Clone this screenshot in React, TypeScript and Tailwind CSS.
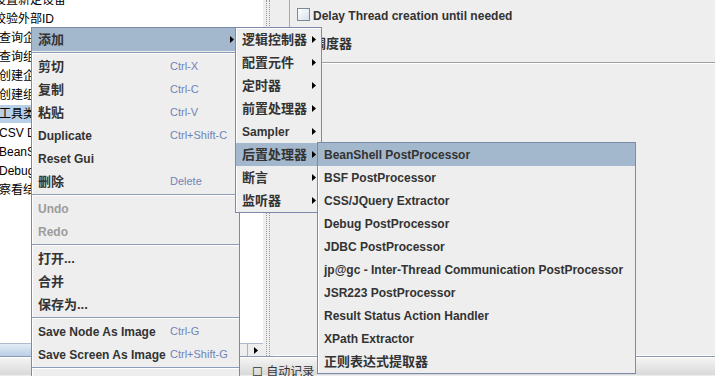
import React from "react";

type Item =
  | "sep"
  | { label: string; keys?: string; arrow?: boolean; active?: boolean; disabled?: boolean };

const isCjk = (s: string) => /[\u4e00-\u9fff]/.test(s);

const mainMenu: Item[] = [
  { label: "添加", arrow: true, active: true },
  "sep",
  { label: "剪切", keys: "Ctrl-X" },
  { label: "复制", keys: "Ctrl-C" },
  { label: "粘贴", keys: "Ctrl-V" },
  { label: "Duplicate", keys: "Ctrl+Shift-C" },
  { label: "Reset Gui" },
  { label: "删除", keys: "Delete" },
  "sep",
  { label: "Undo", disabled: true },
  { label: "Redo", disabled: true },
  "sep",
  { label: "打开..." },
  { label: "合并" },
  { label: "保存为..." },
  "sep",
  { label: "Save Node As Image", keys: "Ctrl-G" },
  { label: "Save Screen As Image", keys: "Ctrl+Shift-G" },
  "sep",
  { label: "Save Selection As..." },
];

const addMenu: Item[] = [
  { label: "逻辑控制器", arrow: true },
  { label: "配置元件", arrow: true },
  { label: "定时器", arrow: true },
  { label: "前置处理器", arrow: true },
  { label: "Sampler", arrow: true },
  { label: "后置处理器", arrow: true, active: true },
  { label: "断言", arrow: true },
  { label: "监听器", arrow: true },
];

const postMenu: Item[] = [
  { label: "BeanShell PostProcessor", active: true },
  { label: "BSF PostProcessor" },
  { label: "CSS/JQuery Extractor" },
  { label: "Debug PostProcessor" },
  { label: "JDBC PostProcessor" },
  { label: "jp@gc - Inter-Thread Communication PostProcessor" },
  { label: "JSR223 PostProcessor" },
  { label: "Result Status Action Handler" },
  { label: "XPath Extractor" },
  { label: "正则表达式提取器" },
];

const treeRows = [
  { text: "设置新定设备", shift: true },
  { text: "校验外部ID", shift: true },
  { text: "查询企业信息" },
  { text: "查询组织信息" },
  { text: "创建企业" },
  { text: "创建组织" },
  { text: "工具类", selected: true },
  { text: "CSV Data Set Config" },
  { text: "BeanShell Sampler" },
  { text: "Debug Sampler" },
  { text: "察看结果树" },
];

const Arrow = () => (
  <svg width="4" height="7" viewBox="0 0 4 7" className="shrink-0">
    <path d="M0 0L4 3.5L0 7Z" fill="#000" />
  </svg>
);

const CheckBox = () => (
  <div className="w-[13px] h-[13px] border border-[#7a8a99] bg-gradient-to-br from-white to-[#d4e0ec] shrink-0" />
);

const Menu = ({ items, labelWidth }: { items: Item[]; labelWidth?: number }) => (
  <div className="border border-[#7b8aa9] bg-[#eeeeee] shadow-[inset_1px_1px_0_#fff] py-0">
    {items.map((it, i) => {
      if (it === "sep")
        return (
          <div key={i} className="h-[4px] flex flex-col justify-center">
            <div className="border-t border-[#8c9bb8] border-b border-b-white" />
          </div>
        );
      const size = isCjk(it.label) ? "text-[13px]" : "text-[12px]";
      const color = it.disabled ? "text-[#9c9c9c]" : "text-[#333333]";
      return (
        <div
          key={i}
          className={`h-[23px] flex items-center pl-[6px] pr-[5px] ${it.active ? "bg-[#a3b8cc]" : ""}`}
        >
          <span
            className={`font-bold whitespace-nowrap ${size} ${color}`}
            style={labelWidth ? { width: labelWidth } : undefined}
          >
            {it.label}
          </span>
          {it.keys && (
            <span className="text-[11px] text-[#7184b6] whitespace-nowrap">{it.keys}</span>
          )}
          {it.arrow && (
            <span className="ml-auto">
              <Arrow />
            </span>
          )}
        </div>
      );
    })}
  </div>
);

export default function App() {
  return (
    <div className="w-[715px] h-[376px] relative overflow-hidden bg-[#eeeeee] font-['Liberation_Sans','Noto_Sans_CJK_SC',sans-serif]">
      <div className="flex h-[357px] border-b border-[#8a9ab2]">
        {/* tree */}
        <div className="w-[263px] flex flex-col">
          <div className="flex-1 bg-white overflow-hidden">
            <div className="flex flex-col -mt-[10px]">
              {treeRows.map((r, i) => (
                <div key={i} className="h-[19px] flex items-center">
                  <span
                    className={`text-[12px] text-black whitespace-nowrap pr-[2px] ${r.shift ? "-ml-[6px]" : "-ml-[1px]"} ${r.selected ? "bg-[#b8cfe5]" : ""}`}
                  >
                    {r.text}
                  </span>
                </div>
              ))}
            </div>
          </div>
          <div className="h-[13px] flex border-t border-[#b0bccb] bg-[#eeeeee]">
            <div className="w-[230px] bg-gradient-to-b from-[#e4edf6] to-[#b8cfe5] border-r border-[#8da0b8]" />
            <div className="flex-1" />
            <div className="w-[16px] border-l border-[#a8b4c4] flex items-center justify-center bg-[#eeeeee]">
              <Arrow />
            </div>
          </div>
        </div>
        {/* divider */}
        <div className="w-[10px] flex justify-center gap-[2px] bg-[#eeeeee]">
          <div className="w-px border-l border-dotted border-[#9a9a9a]" />
          <div className="w-px border-l border-dotted border-[#9a9a9a]" />
        </div>
        {/* right panel */}
        <div className="flex-1 flex flex-col shadow-[inset_0_-1px_0_#fff]">
          <div className="ml-[16px] border-l border-[#a8a8a8] h-[28px] flex items-start pt-[8px] pl-[7px] gap-[3px]">
            <CheckBox />
            <span className="text-[12px] font-bold text-[#333333] -mt-[1px]">
              Delay Thread creation until needed
            </span>
          </div>
          <div className="ml-[17px] h-[34px] flex items-center pl-[7px] gap-[3px] pb-[2px]">
            <CheckBox />
            <span className="text-[13px] font-bold text-[#333333]">调度器</span>
          </div>
          <div className="ml-[16px] border-t border-[#a0a0a0] border-b border-b-white" />
        </div>
      </div>
      {/* bottom strip */}
      <div className="h-[18px] bg-gradient-to-b from-[#f4f4f4] to-[#d9d9d9] border-t border-white flex items-end pl-[252px]">
        <span className="text-[12px] text-[#333333] translate-y-[6px]">☐ 自动记录</span>
      </div>

      {/* popup menus */}
      <div className="absolute left-[31px] top-[27px] w-[209px]">
        <Menu items={mainMenu} labelWidth={132} />
      </div>
      <div className="absolute left-[235px] top-[27px] w-[87px]">
        <Menu items={addMenu} />
      </div>
      <div className="absolute left-[317px] top-[142px] w-[319px]">
        <Menu items={postMenu} />
      </div>
    </div>
  );
}
